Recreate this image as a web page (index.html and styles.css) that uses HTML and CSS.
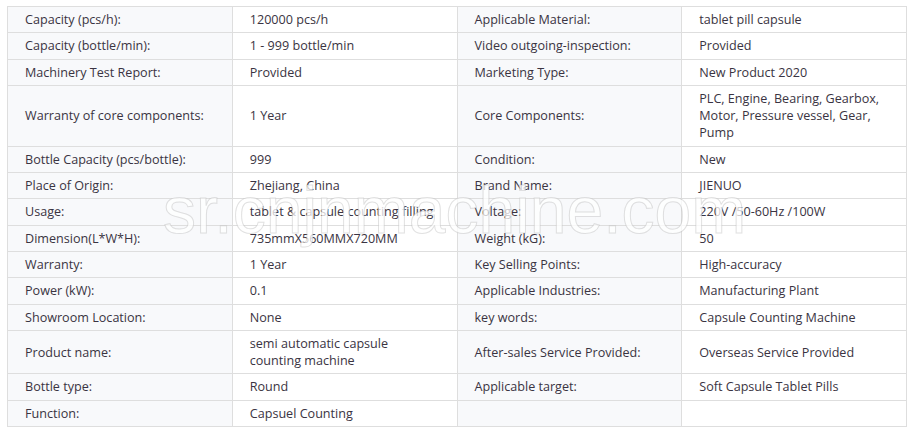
FILE: index.html
```html
<!DOCTYPE html>
<html>
<head>
<meta charset="utf-8">
<link rel="stylesheet" href="styles.css">
</head>
<body>
<div class="wrap">
<table class="spec">
<tr><td class="k">Capacity (pcs/h):</td><td class="v">120000 pcs/h</td><td class="k">Applicable Material:</td><td class="v">tablet pill capsule</td></tr>
<tr><td class="k">Capacity (bottle/min):</td><td class="v">1 - 999 bottle/min</td><td class="k">Video outgoing-inspection:</td><td class="v">Provided</td></tr>
<tr><td class="k">Machinery Test Report:</td><td class="v">Provided</td><td class="k">Marketing Type:</td><td class="v">New Product 2020</td></tr>
<tr><td class="k">Warranty of core components:</td><td class="v">1 Year</td><td class="k">Core Components:</td><td class="v">PLC, Engine, Bearing, Gearbox, Motor, Pressure vessel, Gear, Pump</td></tr>
<tr><td class="k">Bottle Capacity (pcs/bottle):</td><td class="v">999</td><td class="k">Condition:</td><td class="v">New</td></tr>
<tr><td class="k">Place of Origin:</td><td class="v">Zhejiang, China</td><td class="k">Brand Name:</td><td class="v">JIENUO</td></tr>
<tr><td class="k">Usage:</td><td class="v">tablet &amp; capsule counting filling</td><td class="k">Voltage:</td><td class="v">220V /50-60Hz /100W</td></tr>
<tr><td class="k">Dimension(L*W*H):</td><td class="v">735mmX560MMX720MM</td><td class="k">Weight (kG):</td><td class="v">50</td></tr>
<tr><td class="k">Warranty:</td><td class="v">1 Year</td><td class="k">Key Selling Points:</td><td class="v">High-accuracy</td></tr>
<tr><td class="k">Power (kW):</td><td class="v">0.1</td><td class="k">Applicable Industries:</td><td class="v">Manufacturing Plant</td></tr>
<tr><td class="k">Showroom Location:</td><td class="v">None</td><td class="k">key words:</td><td class="v">Capsule Counting Machine</td></tr>
<tr><td class="k">Product name:</td><td class="v">semi automatic capsule counting machine</td><td class="k">After-sales Service Provided:</td><td class="v">Overseas Service Provided</td></tr>
<tr><td class="k">Bottle type:</td><td class="v">Round</td><td class="k">Applicable target:</td><td class="v">Soft Capsule Tablet Pills</td></tr>
<tr><td class="k">Function:</td><td class="v">Capsuel Counting</td><td class="k"></td><td class="v"></td></tr>
</table>
<div class="watermark">sr.cnjnmachine.com</div>
</div>
</body>
</html>
```

FILE: styles.css
```css
html, body {
  margin: 0;
  padding: 0;
  background: #ffffff;
}
.wrap {
  position: relative;
  padding: 6px 12px 0 7px;
}
.spec {
  width: 900px;
  border-collapse: collapse;
  table-layout: fixed;
  font-family: "Open Sans", "Liberation Sans", sans-serif;
  font-size: 12.6px;
  line-height: 17.3px;
  color: #3a3442;
}
.spec td {
  border: 1px solid #dedede;
  padding: 4px 20px 4px 17px;
  vertical-align: middle;
  width: 25%;
}
.spec td.k {
  background: #f8f9fb;
}
.spec td.v {
  background: #ffffff;
}
.watermark {
  position: absolute;
  left: 163px;
  top: 170px;
  font-family: "Liberation Sans", Arial, sans-serif;
  font-size: 66px;
  line-height: 80px;
  color: rgba(255, 255, 255, 0.75);
  -webkit-text-stroke: 1px rgba(170, 170, 170, 0.35);
  pointer-events: none;
  white-space: nowrap;
}
```
